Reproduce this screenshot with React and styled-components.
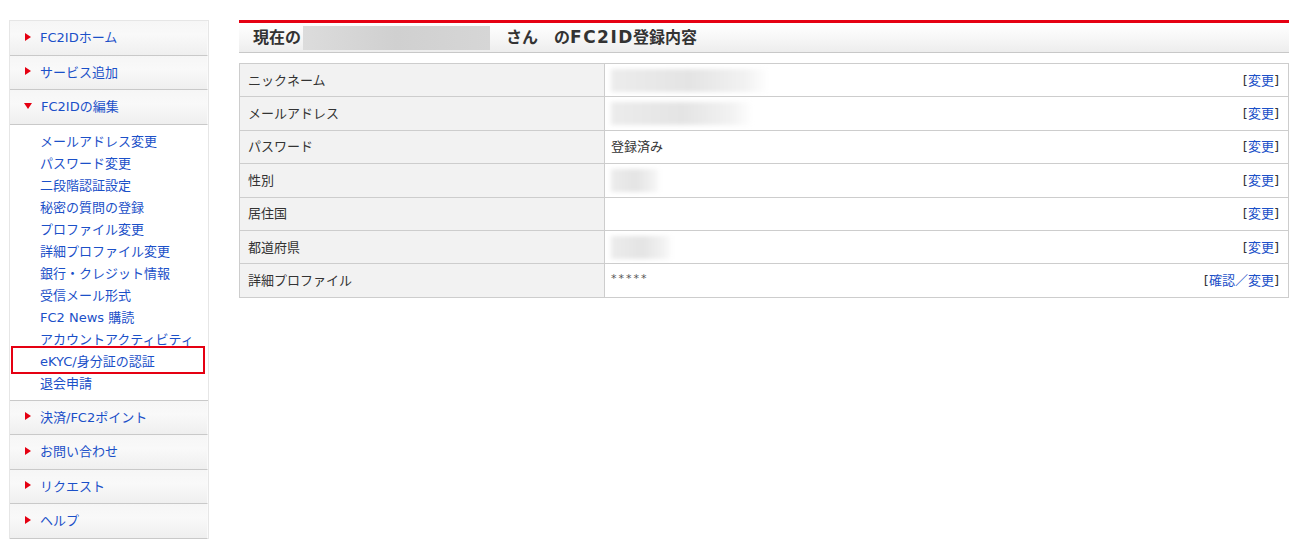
import React from 'react';
import styled, { createGlobalStyle } from 'styled-components';

const GlobalStyle = createGlobalStyle`
  body {
    margin: 0;
    background: #fff;
    font-family: "DejaVu Sans", "Noto Sans CJK JP", sans-serif;
    font-size: 13px;
    color: #333;
  }
`;

const topMenu = [
  { label: 'FC2IDホーム' },
  { label: 'サービス追加' },
  { label: 'FC2IDの編集', open: true },
];

const subMenu = [
  'メールアドレス変更',
  'パスワード変更',
  '二段階認証設定',
  '秘密の質問の登録',
  'プロファイル変更',
  '詳細プロファイル変更',
  '銀行・クレジット情報',
  '受信メール形式',
  'FC2 News 購読',
  'アカウントアクティビティ',
  'eKYC/身分証の認証',
  '退会申請',
];

const bottomMenu = ['決済/FC2ポイント', 'お問い合わせ', 'リクエスト', 'ヘルプ'];

const rows = [
  { label: 'ニックネーム', blur: 158 },
  { label: 'メールアドレス', blur: 142 },
  { label: 'パスワード', value: '登録済み' },
  { label: '性別', blur: 50 },
  { label: '居住国' },
  { label: '都道府県', blur: 62 },
  { label: '詳細プロファイル', value: '*****', masked: true, link: '確認／変更' },
];

const App = () => {
  return (
    <>
      <GlobalStyle />
      <Page>
        <Side>
          {topMenu.map((m) => (
            <MenuHead key={m.label}>
              <Arrow open={m.open} />
              <a href="#">{m.label}</a>
            </MenuHead>
          ))}
          <SubList>
            {subMenu.map((s) => (
              <SubItem key={s} marked={s.startsWith('eKYC')}>
                <a href="#">{s}</a>
              </SubItem>
            ))}
          </SubList>
          {bottomMenu.map((m) => (
            <MenuHead key={m}>
              <Arrow />
              <a href="#">{m}</a>
            </MenuHead>
          ))}
        </Side>
        <Main>
          <TitleBar>
            <h2>
              現在の<NameBlur />さん　の<Latin>FC2ID</Latin>登録内容
            </h2>
          </TitleBar>
          <InfoTable>
            <tbody>
              {rows.map((r) => (
                <tr key={r.label}>
                  <th>{r.label}</th>
                  <td>
                    <ValueCell>
                      {r.blur ? (
                        <ValueBlur style={{ width: r.blur }} />
                      ) : (
                        <Value masked={r.masked}>{r.value}</Value>
                      )}
                      <EditLink>
                        [<a href="#">{r.link || '変更'}</a>]
                      </EditLink>
                    </ValueCell>
                  </td>
                </tr>
              ))}
            </tbody>
          </InfoTable>
        </Main>
      </Page>
    </>
  );
};

const Page = styled.div`
  display: flex;
  align-items: flex-start;
  gap: 30px;
  padding: 20px 24px 0 9px;
`;

const Side = styled.div`
  width: 198px;
  flex-shrink: 0;
  border: 1px solid #e6e6e6;
  border-bottom: none;
  a {
    color: #1b50c8;
    text-decoration: none;
  }
`;

const MenuHead = styled.div`
  display: flex;
  align-items: center;
  box-sizing: border-box;
  height: 34.5px;
  padding: 0 0 2px 14px;
  border-bottom: 1px solid #c9c9c9;
  border-right: 1px solid #fafafa;
  background: linear-gradient(#f6f6f6, #f9f9f9 40%, #efefef);
`;

const Arrow = styled.span`
  width: 0;
  height: 0;
  margin-left: 1px;
  ${({ open }) =>
    open
      ? `border-left: 4px solid transparent;
         border-right: 4px solid transparent;
         border-top: 6px solid #e50012;
         margin-left: 0;
         margin-right: 9px;`
      : `border-top: 4px solid transparent;
         border-bottom: 4px solid transparent;
         border-left: 6px solid #e50012;
         margin-right: 9px;`}
`;

const SubList = styled.ul`
  list-style: none;
  margin: 0;
  padding: 6px 0 5px 30px;
  background: #fff;
  border-bottom: 1px solid #c9c9c9;
`;

const SubItem = styled.li`
  position: relative;
  line-height: 22px;
  height: 22px;
  ${({ marked }) =>
    marked &&
    `&::after {
      content: '';
      position: absolute;
      left: -29px;
      top: -5px;
      width: 190px;
      height: 24px;
      border: 2px solid #e50012;
    }`}
`;

const Main = styled.div`
  flex: 1;
  min-width: 0;
`;

const TitleBar = styled.div`
  border-top: 3px solid #e50012;
  border-bottom: 1px solid #c8c8c8;
  background: linear-gradient(#fff, #f8f8f8 45%, #ededed);
  height: 29px;
  padding-left: 14px;
  h2 {
    margin: 0;
    font-size: 16px;
    font-weight: bold;
    line-height: 28px;
    color: #333;
    white-space: nowrap;
  }
`;

const Latin = styled.span`
  font-size: 17px;
  letter-spacing: 1.5px;
  margin-right: -1px;
`;

const NameBlur = styled.span`
  display: inline-block;
  vertical-align: middle;
  width: 187px;
  height: 24px;
  margin: -1px 16px 0 2px;
  background: linear-gradient(90deg, #dcdcdc, #d0d0d0 50%, #d6d6d6);
`;

const InfoTable = styled.table`
  width: 100%;
  margin-top: 10px;
  border-collapse: collapse;
  border: 1px solid #cdcdcd;
  th,
  td {
    border: 1px solid #cdcdcd;
    height: 30.4px;
    padding: 0 0 2px;
    font-weight: normal;
    text-align: left;
    font-size: 13px;
    color: #333;
  }
  th {
    width: 356px;
    padding-left: 8px;
    background: #f2f2f2;
  }
  td {
    padding: 0 9px 2px 6px;
    background: #fff;
  }
`;

const ValueCell = styled.div`
  display: flex;
  justify-content: space-between;
  align-items: center;
`;

const Value = styled.span`
  ${({ masked }) =>
    masked &&
    `font-size: 11px;
     letter-spacing: 2px;
     color: #555;
     margin-top: -3px;`}
`;

const ValueBlur = styled.span`
  display: block;
  height: 23px;
  margin-top: 2px;
  background: linear-gradient(90deg, #ececec, #e4e4e4 50%, #f2f2f2 85%, #fff);
  filter: blur(2px);
`;

const EditLink = styled.span`
  color: #333;
  a {
    color: #1b50c8;
    text-decoration: none;
  }
`;

export default App;
